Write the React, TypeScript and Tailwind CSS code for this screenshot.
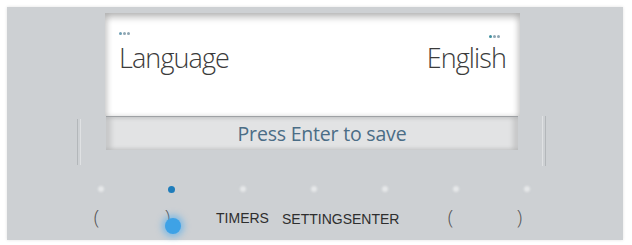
import React from 'react';

const sans = "font-['Open_Sans','Noto_Sans',sans-serif]";

function Dots({ first }: { first: string }) {
  return (
    <div className="flex gap-[1px]">
      <span className={`w-[3px] h-[3px] rounded-full ${first}`} />
      <span className="w-[3px] h-[3px] rounded-full bg-[#8fa6b3]" />
      <span className="w-[3px] h-[3px] rounded-full bg-[#8fa6b3]" />
    </div>
  );
}

export default function App() {
  const indicators = [false, true, false, false, false, false, false];

  return (
    <div className="w-[632px] h-[245px] bg-white pt-[7px] pl-[7px]">
      <div className="w-[616px] h-[233px] bg-[#cdd0d3] shadow-[0_0_3px_rgba(0,0,0,0.12)] pt-[6px]">
        {/* display + frame lines */}
        <div className="ml-[70px] w-[469px]">
          <div className="ml-[28px] w-[415px] h-[103px] bg-white shadow-[inset_0_5px_6px_rgba(0,0,0,0.22),inset_4px_0_5px_rgba(0,0,0,0.08),inset_-4px_0_5px_rgba(0,0,0,0.08)] px-[14px] pt-[19px]">
            <div className="flex justify-between items-end">
              <div className="flex flex-col gap-[8px]">
                <Dots first="bg-[#6f9fb4]" />
                <span className={`${sans} font-light text-[27px] leading-[30px] text-[#3b3b3b] tracking-[-0.9px]`}>
                  Language
                </span>
              </div>
              <div className="flex flex-col items-end gap-[5px]">
                <div className="mr-[6px]">
                  <Dots first="bg-[#3f8f9f]" />
                </div>
                <span className={`${sans} font-light text-[27px] leading-[30px] text-[#3b3b3b] tracking-[-0.9px]`}>
                  English
                </span>
              </div>
            </div>
          </div>
          <div className="flex items-start">
            <div className="mt-[3px] flex gap-[2px]">
              <div className="w-px h-[46px] bg-[#b3b7ba]" />
              <div className="w-px h-[46px] bg-[#dfe1e3]" />
            </div>
            <div className="ml-[25px] w-[415px] h-[34px] bg-[#e2e3e4] border-t border-[#9ea1a4] shadow-[inset_5px_0_5px_rgba(0,0,0,0.12),inset_-5px_0_5px_rgba(0,0,0,0.12)] flex items-center justify-center pl-[20px]">
              <span className={`${sans} text-[19.5px] text-[#4b6d86] tracking-[-0.2px]`}>Press Enter to save</span>
            </div>
            <div className="ml-[24px] flex gap-[2px]">
              <div className="w-px h-[50px] bg-[#dfe1e3]" />
              <div className="w-px h-[50px] bg-[#b3b7ba]" />
            </div>
          </div>
        </div>

        {/* indicator lights */}
        <div className="mt-[18px] ml-[58px] grid grid-cols-[repeat(7,71px)] h-[10px] items-center">
          {indicators.map((on, i) => (
            <div key={i} className="flex justify-center">
              {on ? (
                <span className="w-[7px] h-[7px] rounded-full bg-[#1f7dbb]" />
              ) : (
                <span className="w-[6px] h-[6px] rounded-full bg-[#e6e8ea] blur-[1px]" />
              )}
            </div>
          ))}
        </div>

        {/* button labels */}
        <div className="mt-[12px] ml-[58px] grid grid-cols-[repeat(7,71px)] h-[20px] items-center">
          <div className="flex justify-center pr-[8px]">
            <span className={`${sans} font-light text-[20px] text-[#555] leading-none`}>(</span>
          </div>
          <div className="relative flex justify-center pr-[8px]">
            <span className={`${sans} font-light text-[20px] text-[#555] leading-none`}>)</span>
            <span className="absolute left-[29px] top-[10px] w-[16px] h-[16px] rounded-full bg-[#3ea2e6] shadow-[0_0_6px_3px_rgba(70,170,240,0.55)]" />
          </div>
          <div className="flex justify-center">
            <span className="font-['Liberation_Sans',Arial,sans-serif] text-[14px] text-[#2e2e2e] leading-none">TIMERS</span>
          </div>
          <div className="col-span-2 pl-[4px]">
            <span className="font-['Liberation_Sans',Arial,sans-serif] text-[14px] text-[#2e2e2e] leading-none">SETTINGSENTER</span>
          </div>
          <div className="flex justify-center pr-[10px]">
            <span className={`${sans} font-light text-[20px] text-[#555] leading-none`}>(</span>
          </div>
          <div className="flex justify-center pr-[14px]">
            <span className={`${sans} font-light text-[20px] text-[#555] leading-none`}>)</span>
          </div>
        </div>
      </div>
    </div>
  );
}
